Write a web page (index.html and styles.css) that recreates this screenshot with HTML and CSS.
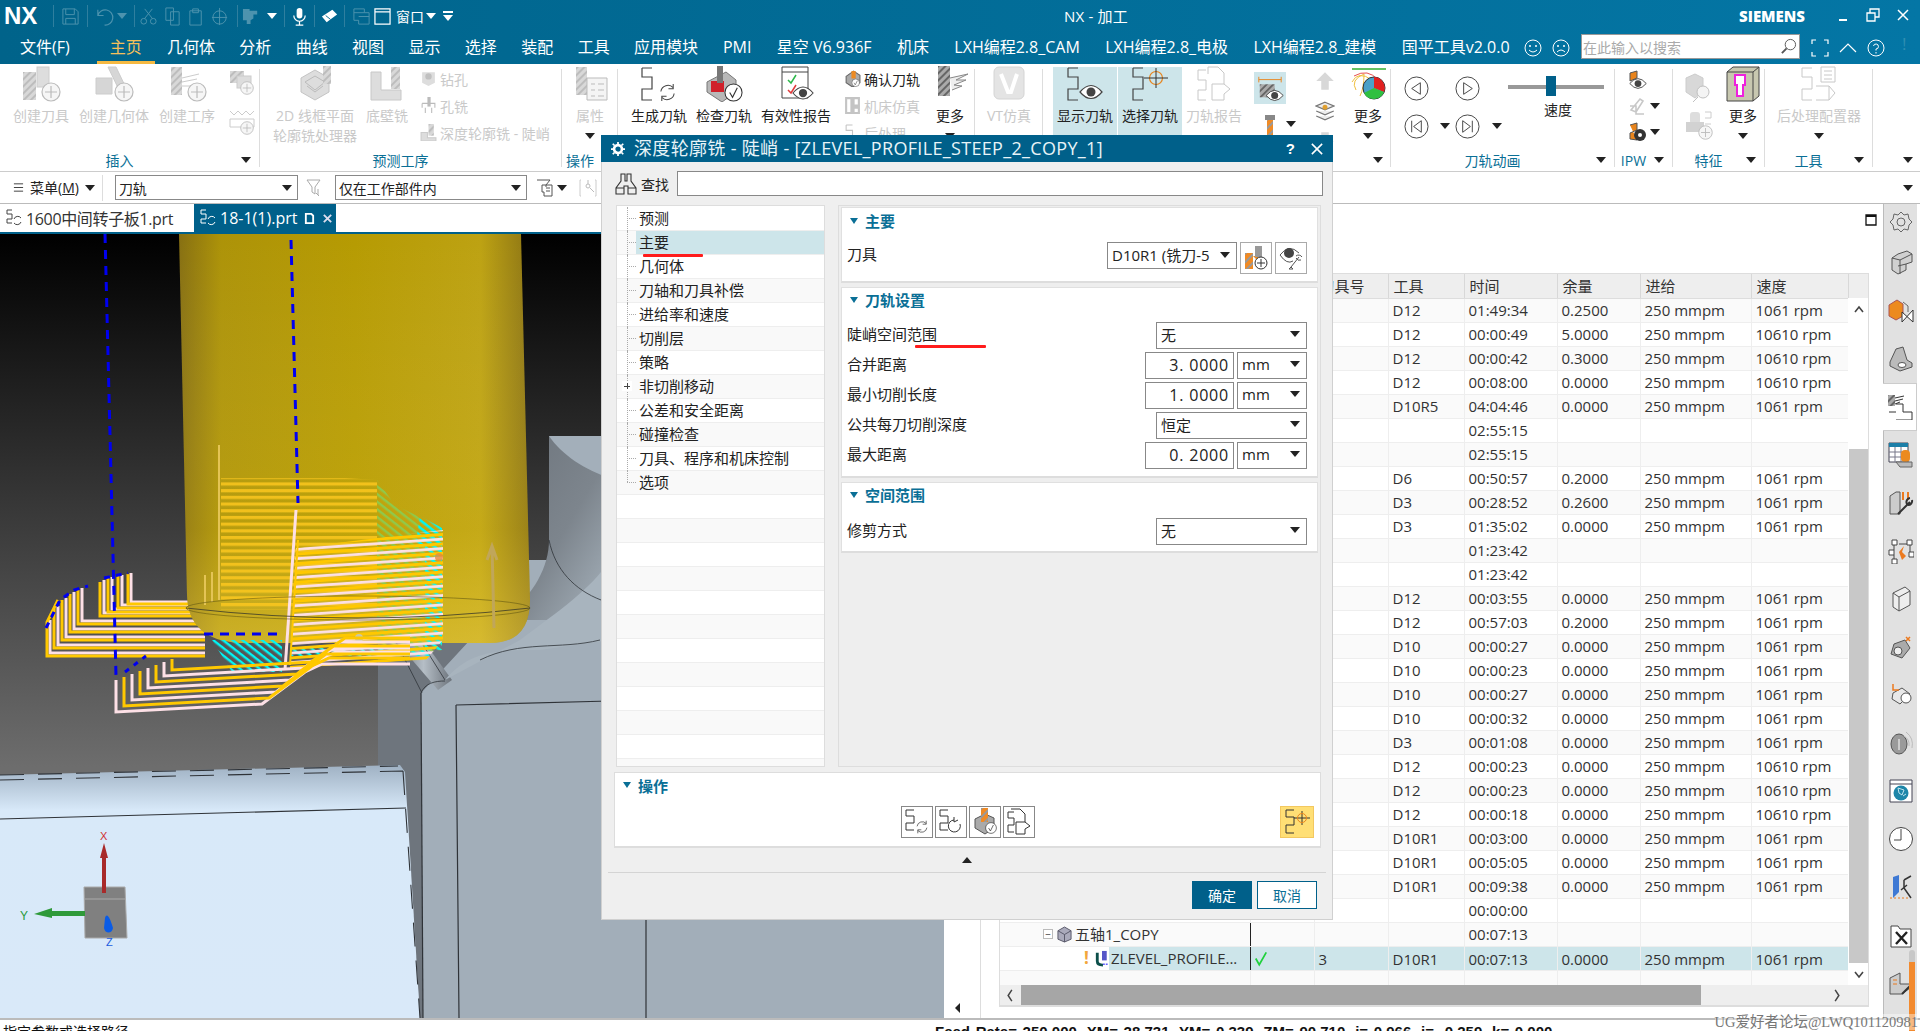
FILE: index.html
```html
<!DOCTYPE html>
<html lang="zh">
<head>
<meta charset="utf-8">
<title>NX - 加工</title>
<link rel="stylesheet" href="styles.css">
</head>
<body>
<svg class="defs" aria-hidden="true">
  <defs>
    <pattern id="hatch" width="5" height="5" patternUnits="userSpaceOnUse" patternTransform="rotate(45)"><rect width="5" height="5" fill="#d8d8d8"/><rect width="2" height="5" fill="#bdbdbd"/></pattern>
    <pattern id="hatchD" width="5" height="5" patternUnits="userSpaceOnUse" patternTransform="rotate(45)"><rect width="5" height="5" fill="#aaa"/><rect width="2" height="5" fill="#666"/></pattern>
    <pattern id="hatchO" width="6" height="6" patternUnits="userSpaceOnUse" patternTransform="rotate(45)"><rect width="6" height="6" fill="#f08a24"/><rect width="2" height="6" fill="#999"/></pattern>
    <symbol id="sp" viewBox="0 0 40 36"><path d="M3 2H13M3 2V11H13V23H3V34H13" fill="none" stroke="currentColor" stroke-width="1.2"/></symbol>
    <symbol id="plus" viewBox="0 0 20 20"><circle cx="10" cy="10" r="9" fill="#f6f6f6" stroke="#bbb" stroke-width="1.2"/><path d="M10 4V16M4 10H16" stroke="#bbb" stroke-width="1.2"/></symbol>
    <symbol id="eye" viewBox="0 0 24 16"><path d="M1 8Q12-5 23 8Q12 21 1 8Z" fill="#fff" stroke="#444" stroke-width="1.2"/><circle cx="12" cy="8" r="4.5" fill="#444"/></symbol>
    <symbol id="refresh" viewBox="0 0 20 20"><path d="M3 9A7.5 7.5 0 0 1 16 5M17 11A7.5 7.5 0 0 1 4 15M16 1V6H11M4 19V14H9" fill="none" stroke="#444" stroke-width="1.1"/></symbol>
    <symbol id="checkc" viewBox="0 0 20 20"><circle cx="10" cy="10" r="9" fill="#fff" stroke="#333" stroke-width="1.1"/><path d="M6 10L9 15L14 5" fill="none" stroke="#333" stroke-width="1.2"/></symbol>
    <symbol id="cross" viewBox="0 0 24 24"><circle cx="12" cy="12" r="6.5" fill="none" stroke="#e8841c" stroke-width="1.2"/><path d="M0 12H24M12 2V22" stroke="#333" stroke-width="1"/></symbol>
    <symbol id="circleL" viewBox="0 0 26 26"><circle cx="13" cy="13" r="12" fill="#fff" stroke="#444" stroke-width="1"/></symbol>
  </defs>
</svg>

<header class="titlebar">
  <div class="qa">
    <b class="logo">NX</b>
    <i class="qsep"></i>
    <svg class="q20" viewBox="0 0 20 20"><path d="M2 2H15L18 5V18H2ZM5 2V8H14V2M5 18V12H15V18" fill="none" stroke="#4d93ae"/></svg>
    <i class="qsep"></i>
    <svg class="q20" viewBox="0 0 20 20"><path d="M3 3V9H9M3 9A8 8 0 1 1 10 19" fill="none" stroke="#4d93ae" stroke-width="1.2"/></svg>
    <i class="tri tri-dim"></i>
    <i class="qsep"></i>
    <svg class="q20 q-tight" viewBox="0 0 20 20"><circle cx="5" cy="15" r="3" fill="none" stroke="#4d93ae"/><circle cx="15" cy="15" r="3" fill="none" stroke="#4d93ae"/><path d="M6 12L14 2M14 12L6 2" stroke="#4d93ae"/></svg>
    <svg class="q20 q-gap" viewBox="0 0 20 20"><path d="M3 1H11V14H3ZM8 5H17V19H8Z" fill="none" stroke="#4d93ae"/></svg>
    <svg class="q20 q-gap" viewBox="0 0 20 20"><path d="M3 4H15V19H3ZM6 2H12V6H6Z" fill="none" stroke="#4d93ae"/></svg>
    <svg class="q20 q-gap" viewBox="0 0 20 20"><circle cx="9" cy="11" r="7" fill="none" stroke="#4d93ae"/><path d="M9 1V19M1 11H17" stroke="#4d93ae"/></svg>
    <i class="qsep"></i>
    <svg class="q20 q-tight" viewBox="0 0 20 20"><path d="M1 2H8V4H16V8L12 8V12L9 14V18H5V14H1Z" fill="#4d93ae"/></svg>
    <i class="tri tri-w q-tri"></i>
    <i class="qsep"></i>
    <svg class="q20 q-mic" viewBox="0 0 20 20"><rect x="7" y="1" width="6" height="11" rx="3" fill="#fff"/><path d="M4 9A6 6 0 0 0 16 9M10 15V19M6 19H14" fill="none" stroke="#fff" stroke-width="1.3"/></svg>
    <i class="qsep qsep-n"></i>
    <svg class="q20 q-er" viewBox="0 0 20 20"><path d="M2 10L13 3L18 8L7 16Z" fill="#fff"/><path d="M6 9L11 13" stroke="#056890"/></svg>
    <i class="qsep qsep-n"></i>
    <svg class="q20 q-dim" viewBox="0 0 20 20"><path d="M2 2H13V6H18V18H7V14H2ZM2 6H13M7 10H18" fill="none" stroke="#4d93ae"/></svg>
    <svg class="qwin" viewBox="0 0 18 18"><path d="M1 1H17V17H1ZM1 4H17" fill="none" stroke="#fff" stroke-width="1.3"/></svg>
    <span class="qwin-t">窗口</span>
    <i class="tri tri-w"></i>
    <span class="q-more"><i class="tri tri-w"></i></span>
  </div>
  <div class="app-title">NX - 加工</div>
  <div class="brand">SIEMENS</div>
  <div class="winbtn">
    <svg class="wb" viewBox="0 0 14 14"><path d="M3 12H11" stroke="#fff" stroke-width="2"/></svg>
    <svg class="wb" viewBox="0 0 14 14"><path d="M1 5H9V13H1ZM4 5V1H13V9H9" fill="none" stroke="#fff" stroke-width="1.3"/></svg>
    <svg class="wb" viewBox="0 0 14 14"><path d="M2 2L12 12M12 2L2 12" stroke="#fff" stroke-width="1.5"/></svg>
  </div>
</header>

<nav class="menubar">
  <a class="m m-file">文件(F)</a>
  <a class="m m-act">主页</a>
  <a class="m m-c">几何体</a><a class="m m-c">分析</a><a class="m m-c">曲线</a><a class="m m-c">视图</a><a class="m m-c">显示</a><a class="m m-c">选择</a><a class="m m-c">装配</a><a class="m m-c">工具</a><a class="m m-c">应用模块</a><a class="m">PMI</a><a class="m">星空 V6.936F</a><a class="m">机床</a><a class="m">LXH编程2.8_CAM</a><a class="m">LXH编程2.8_电极</a><a class="m">LXH编程2.8_建模</a><a class="m">国平工具v2.0.0</a>
  <svg class="face face-1" viewBox="0 0 18 18"><circle cx="9" cy="9" r="8" fill="none" stroke="#fff"/><circle cx="6" cy="7" r="1" fill="#fff"/><circle cx="12" cy="7" r="1" fill="#fff"/><path d="M5 11Q9 15 13 11" fill="none" stroke="#fff"/></svg>
  <svg class="face" viewBox="0 0 18 18"><circle cx="9" cy="9" r="8" fill="none" stroke="#fff"/><circle cx="6" cy="7" r="1" fill="#fff"/><circle cx="12" cy="7" r="1" fill="#fff"/><path d="M5 13Q9 9 13 13" fill="none" stroke="#fff"/></svg>
  <div class="search"><span>在此输入以搜索</span>
    <svg class="lens" viewBox="0 0 18 18"><circle cx="11" cy="7" r="5.5" fill="none" stroke="#555"/><path d="M7 11L2 16" stroke="#555" stroke-width="2"/></svg>
  </div>
  <svg class="ctl ctl-1" viewBox="0 0 18 18"><path d="M1 5V1H5M13 1H17V5M17 13V17H13M5 17H1V13" fill="none" stroke="#fff" stroke-width="1.2"/></svg>
  <svg class="ctl ctl-2" viewBox="0 0 18 18"><path d="M1 13L9 5L17 13" fill="none" stroke="#fff" stroke-width="1.2"/></svg>
  <svg class="ctl ctl-3" viewBox="0 0 18 18"><circle cx="9" cy="9" r="8" fill="none" stroke="#fff"/><path d="M6.5 7A2.5 2.5 0 1 1 9 10V11.5M9 13V14.5" fill="none" stroke="#fff"/></svg>
  <span class="bang">!</span>
</nav>

<section class="ribbon">
  <div class="group g1">
    <div class="g-body">
      <div class="tool dis w82"><svg class="ic" viewBox="0 0 40 36"><rect x="2" y="6" width="13" height="28" fill="url(#hatch)"/><rect x="16" y="1" width="12" height="20" fill="#ddd" stroke="#ccc"/><use href="#plus" x="20" y="16" width="20" height="20"/></svg><span>创建刀具</span></div>
      <div class="tool dis w64"><svg class="ic" viewBox="0 0 40 36"><path d="M14 1H22L34 26H26ZM2 12H18V28H2Z" fill="#d6d6d6" stroke="#ccc"/><use href="#plus" x="20" y="16" width="20" height="20"/></svg><span>创建几何体</span></div>
      <div class="tool dis w82"><svg class="ic" viewBox="0 0 40 36"><rect x="4" y="1" width="11" height="28" fill="url(#hatch)"/><path d="M15 12L32 8M15 16L30 13M15 20H28" stroke="#ccc" fill="none"/><use href="#plus" x="20" y="16" width="20" height="20"/></svg><span>创建工序</span></div>
      <div class="col-small w28">
        <svg class="ic26" viewBox="0 0 26 26"><rect x="1" y="2" width="14" height="12" fill="url(#hatch)"/><rect x="8" y="7" width="14" height="12" fill="#ddd" stroke="#ccc"/><use href="#plus" x="11" y="12" width="14" height="14"/></svg>
        <svg class="ic26" viewBox="0 0 26 26"><path d="M1 2L5 6L9 2L13 6L17 2L21 6L25 2M1 10H25V18H1Z" fill="none" stroke="#ccc"/><use href="#plus" x="11" y="12" width="14" height="14"/></svg>
      </div>
    </div>
    <div class="g-label">插入<i class="tri g-tri"></i></div>
  </div>

  <div class="group g2">
    <div class="g-body">
      <div class="tool dis w110"><svg class="ic" viewBox="0 0 40 36"><path d="M20 4L34 12V26L20 34L6 26V12Z" fill="#ddd" stroke="#c4c4c4"/><path d="M10 16L20 10L30 16L20 24ZM12 20L20 26L28 20" fill="none" stroke="#bbb"/><rect x="28" y="0" width="8" height="18" fill="url(#hatch)"/></svg><span class="two">2D 线框平面<br>轮廓铣处理器</span></div>
      <div class="tool dis w34"><svg class="ic" viewBox="0 0 40 36"><path d="M4 6H14V24H34V34H4Z" fill="#ddd" stroke="#c8c8c8"/><rect x="24" y="1" width="9" height="22" fill="url(#hatch)"/></svg><span>底壁铣</span></div>
      <ul class="mini w142">
        <li class="dis"><svg class="ic16" viewBox="0 0 16 16"><path d="M2 2H14V12L8 15L2 12Z" fill="#ddd"/><circle cx="8" cy="6" r="3" fill="#c0c0c0"/></svg>钻孔</li>
        <li class="dis"><svg class="ic16" viewBox="0 0 16 16"><rect x="7" y="0" width="3" height="9" fill="#bbb"/><path d="M2 6H14V10M2 6V10M5 10V15M11 10V15" fill="none" stroke="#bbb"/></svg>孔铣</li>
        <li class="dis"><svg class="ic16" viewBox="0 0 16 16"><path d="M1 8H7V13H15V16H1Z" fill="#ddd" stroke="#ccc"/><rect x="8" y="0" width="5" height="11" fill="url(#hatch)"/></svg>深度轮廓铣 - 陡峭</li>
      </ul>
    </div>
    <div class="g-label">预测工序</div>
  </div>

  <div class="group g3">
    <div class="g-body">
      <div class="tool dis w56"><svg class="ic" viewBox="0 0 40 36"><rect x="6" y="1" width="11" height="28" fill="url(#hatch)"/><path d="M17 12H37V34H17ZM21 18H25M21 24H25M21 30H25M28 18H34M28 24H34M28 30H34" fill="#f4f4f4" stroke="#bbb"/></svg><span>属性</span><i class="tri tool-tri"></i></div>
    </div>
    <div class="g-label g-left">操作</div>
  </div>

  <div class="group g4">
    <div class="g-body">
      <div class="tool w82"><svg class="ic dark" viewBox="0 0 40 36"><use href="#sp" width="40" height="36"/><use href="#refresh" x="19" y="17" width="19" height="19"/></svg><span>生成刀轨</span></div>
      <div class="tool w48"><svg class="ic" viewBox="0 0 40 36"><path d="M3 16L22 6L32 14V26L18 36L3 26Z" fill="#b8b8b8" stroke="#777"/><path d="M7 15H20V26H7Z" fill="#d0202a"/><rect x="13" y="0" width="6" height="17" fill="#777"/><use href="#checkc" x="20" y="17" width="19" height="19"/></svg><span>检查刀轨</span></div>
      <div class="tool w96"><svg class="ic" viewBox="0 0 40 36"><path d="M6 1H32V32H6ZM6 6H32" fill="#fff" stroke="#444"/><path d="M12 14L15 17L20 9" fill="none" stroke="#2cb84a" stroke-width="1.5"/><path d="M12 24L15 27L20 19" fill="none" stroke="#e03a3a" stroke-width="1.5"/><use href="#eye" x="16" y="19" width="22" height="16"/></svg><span>有效性报告</span></div>
      <ul class="mini w81 mini-t">
        <li><svg class="ic16" viewBox="0 0 16 16"><path d="M2 6L9 1L15 5V12L8 16L2 12Z" fill="#aaa" stroke="#666"/><path d="M7 1H11V8H7Z" fill="#ec8a22"/><use href="#checkc" x="7" y="8" width="8" height="8"/></svg>确认刀轨</li>
        <li class="dis"><svg class="ic16" viewBox="0 0 16 16"><path d="M2 1H7V15H2ZM9 1H14V8H9ZM9 10H14V15H9Z" fill="none" stroke="#c4c4c4" stroke-width="2"/></svg>机床仿真</li>
        <li class="dis"><svg class="ic16" viewBox="0 0 16 16"><path d="M2 1H8M2 1V6H8V11H2V15" fill="none" stroke="#c4c4c4"/></svg>后处理</li>
      </ul>
      <div class="tool w50"><svg class="ic" viewBox="0 0 40 36"><rect x="8" y="0" width="12" height="30" fill="url(#hatchD)"/><path d="M20 12L38 8L26 14L36 14L24 19L32 20L22 24" fill="#eee" stroke="#888"/></svg><span>更多</span><i class="tri tool-tri"></i></div>
    </div>
    <div class="g-label"></div>
  </div>

  <div class="group g5">
    <div class="g-body">
      <div class="tool dis w68"><svg class="ic" viewBox="0 0 40 36"><rect x="5" y="1" width="30" height="32" rx="5" fill="#e4e4e4" stroke="#d4d4d4"/><path d="M12 8L19 26H22L28 8" fill="none" stroke="#fff" stroke-width="4"/></svg><span>VT仿真</span></div>
    </div>
    <div class="g-label"></div>
  </div>

  <div class="group g6">
    <div class="g-body g6-body">
      <div class="tool hi w64"><svg class="ic dark" viewBox="0 0 40 36"><use href="#sp" width="40" height="36"/><use href="#eye" x="14" y="18" width="24" height="16"/></svg><span>显示刀轨</span></div>
      <div class="tool hi w64 hi2"><svg class="ic dark" viewBox="0 0 40 36"><use href="#sp" width="40" height="36"/><use href="#cross" x="14" y="0" width="24" height="24"/></svg><span>选择刀轨</span></div>
      <div class="tool dis w64"><svg class="ic" viewBox="0 0 40 36"><path d="M14 1H24L30 7V18M14 1V8M30 18H18V34H30V28L36 23L30 18M4 4H12M4 4V14H12V24H4V34H12" fill="none" stroke="#c8c8c8"/></svg><span>刀轨报告</span></div>
      <div class="stack w42">
        <div class="hibox"><svg class="ic26b" viewBox="0 0 30 30"><path d="M3 6H27M3 3V9M27 3V9" stroke="#e8841c" fill="none"/><rect x="4" y="11" width="16" height="14" fill="url(#hatchD)"/><use href="#eye" x="10" y="16" width="20" height="14"/></svg></div>
        <svg class="drill" viewBox="0 0 16 24"><rect x="3" y="0" width="10" height="5" fill="#888"/><rect x="5" y="5" width="6" height="19" fill="url(#hatchO)"/></svg>
      </div>
      <i class="tri drill-tri"></i>
      <div class="stack w40 arrows">
        <svg class="ic16b" viewBox="0 0 16 16"><path d="M8 1L15 8H11V15H5V8H1Z" fill="#d8d8d8"/></svg>
        <svg class="ic16b" viewBox="0 0 16 16"><path d="M8 1L15 4L8 7L1 4ZM1 8L8 11L15 8M1 12L8 15L15 12" fill="#eee" stroke="#777"/><circle cx="8" cy="5" r="2" fill="#e0a030"/></svg>
        <svg class="ic16b" viewBox="0 0 16 16"><path d="M8 15L15 8H11V1H5V8H1Z" fill="#d8d8d8"/></svg>
      </div>
      <div class="tool w46"><svg class="ic" viewBox="0 0 40 36"><path d="M4 3H38" stroke="#2fae2f" stroke-width="1.5"/><path d="M4 16Q10 4 24 14M8 24Q2 14 16 8Q16 22 12 30" fill="none" stroke="#f0c040"/><path d="M6 10Q20 2 30 14" fill="none" stroke="#e85050"/><circle cx="26" cy="22" r="11" fill="#4aa0c8" stroke="#333"/><path d="M26 22V11A11 11 0 0 1 36 26Z" fill="#e02020"/><path d="M26 22L36 26A11 11 0 0 1 16 27Z" fill="#30c040"/></svg><span>更多</span><i class="tri tool-tri"></i></div>
    </div>
    <div class="g-label g-end"><i class="tri"></i></div>
  </div>

  <div class="group g7">
    <div class="g-body anim">
      <svg class="play" viewBox="0 0 26 26"><use href="#circleL" width="26" height="26"/><path d="M17 7L8 13L17 19Z" fill="none" stroke="#444"/></svg>
      <svg class="play" viewBox="0 0 26 26"><use href="#circleL" width="26" height="26"/><path d="M9 7L18 13L9 19Z" fill="none" stroke="#444"/></svg>
      <div class="speed">
        <div class="slider"><i class="thumb"></i></div>
        <span>速度</span>
      </div>
      <div class="playt"><svg class="play" viewBox="0 0 26 26"><use href="#circleL" width="26" height="26"/><path d="M18 7L10 13L18 19ZM8 7V19" fill="none" stroke="#444"/></svg><i class="tri play-tri"></i></div>
      <div class="playt"><svg class="play" viewBox="0 0 26 26"><use href="#circleL" width="26" height="26"/><path d="M8 7L16 13L8 19ZM18 7V19" fill="none" stroke="#444"/></svg><i class="tri play-tri"></i></div>
    </div>
    <div class="g-label">刀轨动画<i class="tri g-tri"></i></div>
  </div>

  <div class="group g8">
    <div class="g-body ipw">
      <div class="ipw-r"><svg class="ic20" viewBox="0 0 20 20"><path d="M3 3L10 1V8L3 11Z" fill="#e8841c" stroke="#555"/><use href="#eye" x="2" y="7" width="18" height="13"/></svg></div>
      <div class="ipw-r"><svg class="ic20" viewBox="0 0 20 20"><path d="M4 14L13 3L16 5L9 16ZM3 10H9V18H17" fill="none" stroke="#c8c8c8" stroke-width="1.6"/></svg><i class="tri ipw-tri"></i></div>
      <div class="ipw-r"><svg class="ic20" viewBox="0 0 20 20"><path d="M3 3L10 1V8L3 11V17L10 18" fill="#e8841c" stroke="#555"/><circle cx="13" cy="13" r="6" fill="#333"/><circle cx="13" cy="13" r="2" fill="#fff"/></svg><i class="tri ipw-tri"></i></div>
    </div>
    <div class="g-label">IPW<i class="tri g-tri"></i></div>
  </div>

  <div class="group g9">
    <div class="g-body">
      <div class="stack w50 feat">
        <svg class="ic30" viewBox="0 0 30 30"><path d="M3 6L12 2L20 6V20L12 26L3 20Z" fill="#d8d8d8" stroke="#ccc"/><circle cx="20" cy="20" r="6" fill="#f4f4f4" stroke="#c0c0c0"/><path d="M15 25L10 30" stroke="#c0c0c0"/></svg>
        <svg class="ic30" viewBox="0 0 30 30"><rect x="7" y="2" width="10" height="12" rx="3" fill="#ddd"/><rect x="3" y="12" width="18" height="10" fill="#d2d2d2"/><path d="M22 2H28V8H22M22 14H28" fill="none" stroke="#ccc"/><use href="#plus" x="15" y="15" width="15" height="15"/></svg>
      </div>
      <div class="tool w40"><svg class="ic" viewBox="0 0 40 36"><path d="M4 6L10 1H36V30L30 35H4Z" fill="#c8c8b0" stroke="#444"/><path d="M4 6H30V35M30 6L36 1" fill="none" stroke="#444"/><path d="M12 9H22V19H20V30H14V19H12Z" fill="#fff" stroke="#ee22dd" stroke-width="2"/></svg><span>更多</span><i class="tri tool-tri"></i></div>
    </div>
    <div class="g-label">特征<i class="tri g-tri"></i></div>
  </div>

  <div class="group g10">
    <div class="g-body">
      <div class="tool dis w108"><svg class="ic" viewBox="0 0 40 36"><path d="M3 2H13M3 2V11H13V23H3V34H13M22 1H36V16H22ZM25 5H33M25 9H33M25 13H33M17 20H30V34H17M30 20L36 27L30 34" fill="none" stroke="#c8c8c8"/></svg><span>后处理配置器</span><i class="tri tool-tri"></i></div>
    </div>
    <div class="g-label">工具<i class="tri g-tri"></i></div>
  </div>

  <div class="group g11">
    <div class="g-body"></div>
    <div class="g-label g-end"><i class="tri"></i></div>
  </div>
</section>

<section class="toolbar">
  <svg class="burger" viewBox="0 0 12 12"><path d="M1 2H11M1 6H11M1 10H11" stroke="#333"/></svg>
  <span class="tb-menu">菜单(<u>M</u>)</span>
  <i class="tri"></i>
  <i class="tb-sep"></i>
  <div class="sel sel-a"><span>刀轨</span><i class="tri"></i></div>
  <svg class="tb-ic" viewBox="0 0 18 18"><path d="M1 1H14L9 8V15L6 13V8Z" fill="none" stroke="#aaa"/><path d="M12 10V16M10 14L13 17" stroke="#aaa" fill="none"/></svg>
  <div class="sel sel-b"><span>仅在工作部件内</span><i class="tri"></i></div>
  <svg class="tb-ic tb-ic-2" viewBox="0 0 18 18"><path d="M1 1H14L10 6V8" fill="none" stroke="#555"/><path d="M6 6H16V17H8V13H6Z" fill="none" stroke="#555"/><path d="M10 9H14M10 12H14" stroke="#555"/></svg>
  <i class="tri"></i>
  <svg class="tb-ic tb-ic-3" viewBox="0 0 18 18"><path d="M2 1H1V17H2M16 1H17V17H16" fill="none" stroke="#ccc"/><circle cx="9" cy="7" r="2" fill="none" stroke="#bbb"/><path d="M9 1V5M11 9L15 13" stroke="#bbb"/></svg>
  <span class="tb-spring"></span>
  <i class="tri tb-last"></i>
</section>

<main class="work">
  <div class="graphics">
    <div class="tabs">
      <div class="tab"><svg class="tab-ic" viewBox="0 0 18 18"><path d="M2 1H7M2 1V5H7V10H2V14H7" fill="none" stroke="#444"/><path d="M9 10A4 4 0 0 1 16 9M16 13A4 4 0 0 1 9 14" fill="none" stroke="#444"/></svg>1600中间转子板1.prt</div>
      <div class="tab tab-on"><svg class="tab-ic" viewBox="0 0 18 18"><path d="M2 1H7M2 1V5H7V10H2V14H7" fill="none" stroke="#fff"/><path d="M9 10A4 4 0 0 1 16 9M16 13A4 4 0 0 1 9 14" fill="none" stroke="#fff"/></svg>18-1(1).prt<svg class="tab-sm" viewBox="0 0 12 12"><path d="M2 1H8L10 3V11H2Z" fill="none" stroke="#fff" stroke-width="2"/></svg><svg class="tab-sm" viewBox="0 0 12 12"><path d="M2 2L10 10M10 2L2 10" stroke="#dde" stroke-width="2"/></svg></div>
    </div>
    <svg class="scene" viewBox="0 234 944 784" preserveAspectRatio="none">
      <defs>
        <linearGradient id="bg" x1="0" y1="0" x2="0" y2="1"><stop offset="0" stop-color="#000"/><stop offset=".68" stop-color="#6d6d6d"/><stop offset="1" stop-color="#6d6d6d"/></linearGradient>
        <linearGradient id="plate" x1="0" y1="0" x2="0" y2="1"><stop offset="0" stop-color="#9fb1c3"/><stop offset=".18" stop-color="#d8e9f9"/><stop offset="1" stop-color="#d9e9f9"/></linearGradient>
        <linearGradient id="toolg" x1="0" y1="0" x2="1" y2="0"><stop offset="0" stop-color="#877012"/><stop offset=".12" stop-color="#ad9308"/><stop offset=".5" stop-color="#b69b02"/><stop offset=".86" stop-color="#bda212"/><stop offset="1" stop-color="#8d7514"/></linearGradient>
        <linearGradient id="toolv" x1="0" y1="0" x2="0" y2="1"><stop offset="0" stop-color="#fff" stop-opacity="0"/><stop offset=".72" stop-color="#ffe040" stop-opacity=".12"/><stop offset="1" stop-color="#ffe060" stop-opacity=".38"/></linearGradient>
        <linearGradient id="metal" x1="0" y1="0" x2="1" y2="1"><stop offset="0" stop-color="#6c737b"/><stop offset=".55" stop-color="#7d858d"/><stop offset="1" stop-color="#a9b5bf"/></linearGradient>
        <linearGradient id="ridge" x1="0" y1="0" x2="1" y2="0"><stop offset="0" stop-color="#6c737b"/><stop offset=".5" stop-color="#b5bec6"/><stop offset="1" stop-color="#6c737b"/></linearGradient>
        <pattern id="stA" width="12" height="6.7" patternUnits="userSpaceOnUse"><rect width="12" height="3.2" fill="#ffc91f"/></pattern>
        <pattern id="stB" width="12" height="9.4" patternUnits="userSpaceOnUse" patternTransform="skewY(-4)"><rect width="12" height="3" fill="#ffc800"/><rect y="4.6" width="12" height="2.8" fill="#fde0e6"/></pattern>
        <pattern id="stC" width="8" height="6" patternUnits="userSpaceOnUse" patternTransform="rotate(38)"><rect width="8" height="2.4" fill="#00f5f5"/></pattern>
        <pattern id="stG" width="8" height="6" patternUnits="userSpaceOnUse" patternTransform="rotate(38)"><rect width="8" height="2.4" fill="#8fc94a"/></pattern>
      </defs>
      <rect x="0" y="234" width="944" height="784" fill="url(#bg)"/>
      <rect x="378" y="560" width="566" height="458" fill="#a2aeb9"/>
      <path d="M549 436H610V620H500C530 600 549 570 549 540Z" fill="url(#metal)"/>
      <path d="M549 436H610V478C585 470 562 455 549 436Z" fill="#a3afba"/>
      <path d="M378 640H470L421 693L423 1018H420L403 770L378 766Z" fill="#6e757d"/>
      <path d="M395 640L438 690L452 680L420 636Z" fill="url(#ridge)"/>
      <path d="M445 680C470 650 500 650 540 650L610 640V560C590 590 560 610 520 640Z" fill="#a8b4be"/>
      <path d="M421 693C425 683 435 681 445 681M549 540C555 570 575 590 601 600M480 660C520 640 560 650 600 640M395 640L422 693M420 640L445 680" fill="none" stroke="#2f3338" stroke-width=".8"/>
      <path d="M456 705L610 701M456 705L459 1018M646 918V1018" fill="none" stroke="#2f3338" stroke-width="1.2"/>
      <path d="M421 693L423 1018" fill="none" stroke="#2f3338" stroke-width="1.2"/>
      <path d="M0 775L400 765L405 772L420 1018H0Z" fill="url(#plate)"/>
      <path d="M0 775L398 766M0 780L403 771M403 771L420 1018" fill="none" stroke="#2f3338" stroke-width="1.1" stroke-dasharray="24 14"/>
      <path d="M0 819L406 808" stroke="#2f3338" stroke-width="1.1" fill="none"/>

      <path class="path-p" fill="none" d="M205 653H50V620M205 645H58V606M205 637H66V598M205 629H74V592M205 621H82V588M205 613H104V580M205 609H112V577M205 605H122V575M205 602H131V573"/>
      <path class="path-y" fill="none" d="M205 656H47V622L58 600M205 648H54V608M205 640H62V600M205 632H70V594M205 624H78V590M205 616H100V582M205 612H108V578M205 608H118V576M205 604H128V574"/>
      <path d="M46 628L60 600L74 590L88 586M104 578L128 573" fill="none" stroke="#0000f0" stroke-width="3" stroke-dasharray="6 6"/>

      <path d="M179 234H521L530 600Q530 643 490 643H240Q188 640 187 595Z" fill="url(#toolg)"/>
      <path d="M179 234H521L530 600Q530 643 490 643H240Q188 640 187 595Z" fill="url(#toolv)"/>
      <path d="M221 478H345L377 480V610H221Z" fill="url(#stA)" opacity=".8"/>
      <path d="M219 445V600M205 575V605M212 572V602" stroke="#e4c455" stroke-width="2" fill="none"/>
      <path d="M377 480L395 505L442 528V590L377 600Z" fill="url(#stG)"/>
      <path d="M420 516L442 528V545L415 548Z" fill="url(#stC)"/>
      <path d="M377 545H442V650L377 660Z" fill="url(#stG)"/>
      <path d="M425 530H442V650L425 650Z" fill="url(#stC)"/>
      <path d="M212 640H282V672H232Z" fill="url(#stC)"/>
      <path d="M290 648H430V656H290Z" fill="url(#stC)"/>
      <path d="M296 548L443 530V640L426 660L290 668Z" fill="url(#stB)"/>
      <path d="M296 510L285 670" stroke="#fde0e6" stroke-width="3" fill="none"/>
      <path d="M298 540L290 665" stroke="#ffc800" stroke-width="2" fill="none"/>
      <ellipse cx="358" cy="608" rx="172" ry="12" fill="none" stroke="#5c5210" stroke-width=".8" opacity=".7"/>
      <path d="M186 608Q358 628 530 608" fill="none" stroke="#3a3a2a" stroke-width=".8"/>
      <path d="M492 546L494 628M487 560L492 546L497 560" fill="none" stroke="#c0a65a" stroke-width="3"/>
      <circle cx="439" cy="557" r="4" fill="#e98a3a" opacity=".8"/>
      <circle cx="359" cy="638" r="4" fill="#c8c8a8"/>

      <path class="path-p" fill="none" d="M116 680V712L262 704L305 672L322 664H410M132 674V700L276 692L319 660L336 652H410M148 668V688L290 680L333 648H410M164 662V676L304 668L340 642H410"/>
      <path class="path-y" fill="none" d="M124 677V706L269 698L312 666L329 658H410M140 671V694L283 686L326 654H410M156 665V682L297 674L333 646H410M172 659V670L311 662L345 638H410"/>

      <path d="M105 234L116 676M291 240L298 503M204 634H282" fill="none" stroke="#0000f0" stroke-width="3" stroke-dasharray="9 7"/>
      <path d="M125 672L146 656" fill="none" stroke="#0000f0" stroke-width="3" stroke-dasharray="5 6"/>

      <path d="M84 887H125L127 938H85Z" fill="#808080" stroke="#aaa"/>
      <path d="M85 899H126" stroke="#aaa" fill="none"/>
      <path d="M102 893V858H100L104 843L108 858H106V893Z" fill="#a82a2a"/>
      <path d="M85 911H52V908L34 914L52 918V916H85Z" fill="#2f9a3a"/>
      <path d="M105 918C107 912 110 918 113 928C112 934 105 934 104 928Z" fill="#0a5ce6"/>
      <text x="100" y="840" class="ax ax-x">X</text>
      <text x="20" y="920" class="ax ax-y">Y</text>
      <text x="106" y="946" class="ax ax-z">Z</text>
    </svg>
  </div>
  <div class="strip"><i class="tri tri-left"></i></div>
  <div class="nav">
    <div class="nav-top"><svg class="nav-win" viewBox="0 0 12 12"><path d="M1 1H11V11H1Z" fill="none" stroke="#111" stroke-width="1.3"/><path d="M1 2H11" stroke="#111" stroke-width="2"/></svg></div>
    <div class="grid">
      <table>
        <colgroup><col class="c-name"><col class="c-chk"><col class="c-no"><col class="c-tool"><col class="c-time"><col class="c-all"><col class="c-feed"><col class="c-spd"><col class="c-sb"></colgroup>
        <thead><tr><th></th><th></th><th>刀具号</th><th>工具</th><th>时间</th><th>余量</th><th>进给</th><th>速度</th><th></th></tr></thead>
        <tbody>
          <tr><td></td><td></td><td></td><td>D12</td><td>01:49:34</td><td>0.2500</td><td>250 mmpm</td><td>1061 rpm</td></tr>
          <tr><td></td><td></td><td></td><td>D12</td><td>00:00:49</td><td>5.0000</td><td>250 mmpm</td><td>10610 rpm</td></tr>
          <tr><td></td><td></td><td></td><td>D12</td><td>00:00:42</td><td>0.3000</td><td>250 mmpm</td><td>10610 rpm</td></tr>
          <tr><td></td><td></td><td></td><td>D12</td><td>00:08:00</td><td>0.0000</td><td>250 mmpm</td><td>10610 rpm</td></tr>
          <tr><td></td><td></td><td></td><td>D10R5</td><td>04:04:46</td><td>0.0000</td><td>250 mmpm</td><td>1061 rpm</td></tr>
          <tr><td></td><td></td><td></td><td></td><td>02:55:15</td><td></td><td></td><td></td></tr>
          <tr><td></td><td></td><td></td><td></td><td>02:55:15</td><td></td><td></td><td></td></tr>
          <tr><td></td><td></td><td></td><td>D6</td><td>00:50:57</td><td>0.2000</td><td>250 mmpm</td><td>1061 rpm</td></tr>
          <tr><td></td><td></td><td></td><td>D3</td><td>00:28:52</td><td>0.2600</td><td>250 mmpm</td><td>1061 rpm</td></tr>
          <tr><td></td><td></td><td></td><td>D3</td><td>01:35:02</td><td>0.0000</td><td>250 mmpm</td><td>1061 rpm</td></tr>
          <tr><td></td><td></td><td></td><td></td><td>01:23:42</td><td></td><td></td><td></td></tr>
          <tr><td></td><td></td><td></td><td></td><td>01:23:42</td><td></td><td></td><td></td></tr>
          <tr><td></td><td></td><td></td><td>D12</td><td>00:03:55</td><td>0.0000</td><td>250 mmpm</td><td>1061 rpm</td></tr>
          <tr><td></td><td></td><td></td><td>D12</td><td>00:57:03</td><td>0.2000</td><td>250 mmpm</td><td>1061 rpm</td></tr>
          <tr><td></td><td></td><td></td><td>D10</td><td>00:00:27</td><td>0.0000</td><td>250 mmpm</td><td>1061 rpm</td></tr>
          <tr><td></td><td></td><td></td><td>D10</td><td>00:00:23</td><td>0.0000</td><td>250 mmpm</td><td>1061 rpm</td></tr>
          <tr><td></td><td></td><td></td><td>D10</td><td>00:00:27</td><td>0.0000</td><td>250 mmpm</td><td>1061 rpm</td></tr>
          <tr><td></td><td></td><td></td><td>D10</td><td>00:00:32</td><td>0.0000</td><td>250 mmpm</td><td>1061 rpm</td></tr>
          <tr><td></td><td></td><td></td><td>D3</td><td>00:01:08</td><td>0.0000</td><td>250 mmpm</td><td>1061 rpm</td></tr>
          <tr><td></td><td></td><td></td><td>D12</td><td>00:00:23</td><td>0.0000</td><td>250 mmpm</td><td>10610 rpm</td></tr>
          <tr><td></td><td></td><td></td><td>D12</td><td>00:00:23</td><td>0.0000</td><td>250 mmpm</td><td>10610 rpm</td></tr>
          <tr><td></td><td></td><td></td><td>D12</td><td>00:00:18</td><td>0.0000</td><td>250 mmpm</td><td>10610 rpm</td></tr>
          <tr><td></td><td></td><td></td><td>D10R1</td><td>00:03:00</td><td>0.0000</td><td>250 mmpm</td><td>1061 rpm</td></tr>
          <tr><td></td><td></td><td></td><td>D10R1</td><td>00:05:05</td><td>0.0000</td><td>250 mmpm</td><td>1061 rpm</td></tr>
          <tr><td></td><td></td><td></td><td>D10R1</td><td>00:09:38</td><td>0.0000</td><td>250 mmpm</td><td>1061 rpm</td></tr>
          <tr><td></td><td></td><td></td><td></td><td>00:00:00</td><td></td><td></td><td></td></tr>
          <tr><td class="tree tree-1"><i class="box">−</i><svg class="ti" viewBox="0 0 16 18"><path d="M8 1L15 5V14L8 17L1 14V5Z" fill="#aab" stroke="#556"/><path d="M1 5L8 9L15 5M8 9V17" stroke="#556" fill="none"/></svg>五轴1_COPY</td><td></td><td></td><td></td><td>00:07:13</td><td></td><td></td><td></td></tr>
          <tr class="row-sel"><td class="tree tree-2"><i class="warn">!</i><svg class="ti ti2" viewBox="0 0 14 18"><path d="M2 3V12Q2 16 8 16" fill="none" stroke="#0c4f4a" stroke-width="3"/><rect x="7" y="1" width="5" height="10" fill="#5656c8"/><path d="M8 15H13" stroke="#00f" stroke-dasharray="2 1"/></svg>ZLEVEL_PROFILE...</td><td><svg class="tick" viewBox="0 0 16 18"><path d="M2 9L6 16L14 2" fill="none" stroke="#1fd13c" stroke-width="2"/></svg></td><td>3</td><td>D10R1</td><td>00:07:13</td><td>0.0000</td><td>250 mmpm</td><td>1061 rpm</td></tr>
          <tr><td></td><td></td><td></td><td></td><td></td><td></td><td></td><td></td></tr>
        </tbody>
      </table>
      <div class="vsb">
        <div class="vsb-up"><svg class="chev" viewBox="0 0 10 8"><path d="M1 7L5 2L9 7" fill="none" stroke="#444" stroke-width="1.6"/></svg></div>
        <div class="vsb-thumb"></div>
        <div class="vsb-down"><svg class="chev" viewBox="0 0 10 8"><path d="M1 1L5 6L9 1" fill="none" stroke="#444" stroke-width="1.6"/></svg></div>
      </div>
      <div class="hsb">
        <svg class="chevh" viewBox="0 0 8 14"><path d="M6 1L2 7L6 13" fill="none" stroke="#444" stroke-width="1.6"/></svg>
        <div class="hsb-thumb"></div>
        <svg class="chevh chevh-r" viewBox="0 0 8 14"><path d="M2 1L6 7L2 13" fill="none" stroke="#444" stroke-width="1.6"/></svg>
      </div>
    </div>
  </div>
  <aside class="rail">
    <div class="r r-first"><svg class="ri" viewBox="0 0 26 26"><circle cx="13" cy="13" r="4" fill="none" stroke="#666"/><path d="M13 3L16 6L20 5L21 10L24 13L21 16L20 21L16 20L13 23L10 20L6 21L5 16L2 13L5 10L6 5L10 6Z" fill="none" stroke="#666"/></svg></div>
    <div class="r"><svg class="ri" viewBox="0 0 26 26"><path d="M10 4L19 1L24 4V12L18 14V20L10 24L4 20V8Z" fill="#d0d0d0" stroke="#555"/><path d="M4 8L12 10L24 4M12 10V24M10 16L18 14" fill="none" stroke="#555"/></svg></div>
    <div class="r"><svg class="ri" viewBox="0 0 26 26"><path d="M1 7L9 2L15 6V18L8 22L1 18Z" fill="#ec8a1f" stroke="#a55"/><path d="M15 4L20 8V14" fill="none" stroke="#666"/><path d="M14 14L25 24V12L14 24Z" fill="#fff" stroke="#333"/></svg></div>
    <div class="r"><svg class="ri" viewBox="0 0 26 26"><path d="M8 3L15 1L19 14L24 17V21L12 25L2 20V16Z" fill="#bbb" stroke="#555"/><ellipse cx="14" cy="19" rx="4" ry="2.5" fill="#fff" stroke="#555"/></svg></div>
    <div class="r r-on"><svg class="ri" viewBox="0 0 26 26"><rect x="1" y="1" width="7" height="11" fill="url(#hatchD)"/><path d="M8 4L17 2M8 7L16 5M8 10L13 8M9 10H16V18H25V26H9M9 18H2" fill="none" stroke="#333"/></svg></div>
    <div class="r"><svg class="ri" viewBox="0 0 26 26"><path d="M1 1H20V20H1Z" fill="#fff" stroke="#445"/><path d="M1 1H20V5H1Z" fill="#1c7fa8"/><path d="M1 10H20M1 15H20M7 5V20M13 5V20" stroke="#778"/><rect x="13" y="8" width="9" height="12" rx="4" fill="#ec8a1f"/><path d="M8 20H24V25H12Z" fill="#bbb" stroke="#666"/></svg></div>
    <div class="r"><svg class="ri" viewBox="0 0 26 26"><path d="M2 6L8 2H12V24H2Z" fill="#ccc" stroke="#555"/><path d="M15 2V10M20 2V10" stroke="#ec7a1f" stroke-width="2"/><path d="M10 24L22 12M22 8A4 4 0 0 0 19 14M24 10A4 4 0 0 1 20 15" stroke="#333" stroke-width="2" fill="none"/></svg></div>
    <div class="r"><svg class="ri" viewBox="0 0 26 26"><path d="M4 2H9V7H4ZM19 2H24V7H19ZM1 12H6V17H1ZM21 14H26V19H21ZM4 21H9V26H4Z" fill="#fff" stroke="#444"/><path d="M6 7V12M22 7V14M6 17V21M11 6H19" stroke="#444"/><path d="M11 14L16 8L14 14L18 18L14 22Z" fill="#ec7a1f"/></svg></div>
    <div class="r"><svg class="ri" viewBox="0 0 26 26"><path d="M5 7L17 1L22 5V19L11 25L5 21Z" fill="#eee" stroke="#555"/><path d="M5 7L11 11V25M11 11L22 5" fill="none" stroke="#555"/></svg></div>
    <div class="r"><svg class="ri" viewBox="0 0 26 26"><path d="M6 10L17 6L22 14L14 24L3 20Z" fill="#aaa" stroke="#555"/><circle cx="10" cy="17" r="4" fill="#eee" stroke="#555"/><path d="M18 3L22 7M22 3L18 7" stroke="#ec7a1f" stroke-width="1.5"/></svg></div>
    <div class="r"><svg class="ri" viewBox="0 0 26 26"><path d="M5 11L14 6L22 12L12 22L4 17Z" fill="#e8e8e8" stroke="#555"/><circle cx="18" cy="16" r="5" fill="#fff" stroke="#555"/><path d="M5 2V8H11" fill="none" stroke="#ec7a1f" stroke-width="1.5"/></svg></div>
    <div class="r"><svg class="ri" viewBox="0 0 26 26"><ellipse cx="11" cy="14" rx="8" ry="10" fill="#9a9a9a" stroke="#555"/><path d="M11 9V20" stroke="#fff"/><path d="M18 2A16 16 0 0 1 24 18M16 6A10 10 0 0 1 21 16" fill="none" stroke="#bbb"/></svg></div>
    <div class="r"><svg class="ri" viewBox="0 0 26 26"><path d="M2 2H24V24H2ZM2 6H24" fill="#fff" stroke="#445"/><circle cx="13" cy="15" r="7.5" fill="#1e86a9"/><path d="M10 10L16 12L14 17L11 15ZM15 18L18 16" stroke="#bfe3ee" fill="none"/></svg></div>
    <div class="r"><svg class="ri" viewBox="0 0 26 26"><circle cx="13" cy="13" r="11.5" fill="#fff" stroke="#444"/><path d="M13 3V14H6" fill="none" stroke="#444"/></svg></div>
    <div class="r"><svg class="ri" viewBox="0 0 26 26"><path d="M5 3L11 1V18L5 24Z" fill="#3f79d4"/><path d="M16 6L23 2M16 6V14L23 24M19 11L13 16" fill="none" stroke="#333" stroke-width="1.5"/><path d="M2 24H20" stroke="#ec7a1f" stroke-dasharray="2 2"/></svg></div>
    <div class="r"><svg class="ri" viewBox="0 0 26 26"><path d="M3 4H10L12 7H23V25H3Z" fill="#fff" stroke="#444"/><path d="M8 10L19 22M19 10L8 22" stroke="#222" stroke-width="2.4"/></svg></div>
    <div class="r"><svg class="ri" viewBox="0 0 26 26"><path d="M2 8L12 3V14H22V18L14 24H2Z" fill="#ccc" stroke="#555"/><path d="M5 10H9M5 14H9" stroke="#ec7a1f"/><path d="M14 24L22 16M22 10L25 13" stroke="#333" stroke-width="2"/></svg></div>
  </aside>
</main>

<footer class="status">
  <span class="st-l">指定参数或选择路径</span>
  <span class="st-r">Feed Rate= 250.000, XM= 28.731, YM= 0.339, ZM= 90.710, i= 0.966, j= -0.259, k= 0.000</span>
</footer>
<i class="orange"></i>
<div class="wm">UG爱好者论坛@LWQ101120981</div>

<section class="dlg">
  <div class="dlg-title">
    <svg class="gear" viewBox="0 0 16 16"><circle cx="8" cy="8" r="4.5" fill="none" stroke="#fff" stroke-width="3"/><path d="M8 0V3M8 13V16M0 8H3M13 8H16M2 2L4 4M12 12L14 14M14 2L12 4M4 12L2 14" stroke="#fff" stroke-width="2"/></svg>
    <span class="dlg-name">深度轮廓铣 - 陡峭 - [ZLEVEL_PROFILE_STEEP_2_COPY_1]</span>
    <b class="dlg-help">?</b>
    <svg class="dlg-x" viewBox="0 0 14 14"><path d="M1 1L13 13M13 1L1 13" stroke="#fff" stroke-width="1.8"/></svg>
  </div>
  <div class="dlg-find">
    <svg class="bino" viewBox="0 0 24 24"><path d="M7 2H11V9H13V2H17V9L22 16V22H14V14H10V22H2V16L7 9ZM2 16H10M14 16H22" fill="none" stroke="#333" stroke-width="1.1"/></svg>
    <span class="find-t">查找</span>
    <div class="find-in"></div>
  </div>
  <div class="dlg-body">
    <ul class="dtree">
      <li><span>预测</span></li>
      <li class="on"><span>主要</span></li>
      <li><span>几何体</span></li>
      <li><span>刀轴和刀具补偿</span></li>
      <li><span>进给率和速度</span></li>
      <li><span>切削层</span></li>
      <li><span>策略</span></li>
      <li class="exp"><span>非切削移动</span></li>
      <li><span>公差和安全距离</span></li>
      <li><span>碰撞检查</span></li>
      <li><span>刀具、程序和机床控制</span></li>
      <li class="last"><span>选项</span></li>
      <li class="none"></li><li class="none"></li><li class="none"></li><li class="none"></li><li class="none"></li><li class="none"></li><li class="none"></li><li class="none"></li><li class="none"></li><li class="none"></li><li class="none"></li><li class="none"></li>
    </ul>
    <div class="dpanel">
      <div class="card c-a">
        <h3><i class="tri tri-teal"></i>主要</h3>
        <div class="frow frow-tool">
          <label>刀具</label>
          <div class="dd dd-tool">D10R1 (铣刀-5<i class="tri"></i></div>
          <div class="tbtn"><svg viewBox="0 0 24 26"><rect x="1" y="8" width="8" height="16" fill="url(#hatchO)"/><path d="M9 11H14V16" fill="#ec8a1f"/><rect x="11" y="1" width="7" height="11" fill="#999"/><circle cx="17" cy="18" r="6" fill="#fff" stroke="#333"/><path d="M17 14V22M13 18H21" stroke="#333"/></svg></div>
          <div class="tbtn"><svg viewBox="0 0 24 26"><path d="M1 10Q10-2 20 8" fill="#fff" stroke="#555"/><path d="M1 10Q8 20 14 16" fill="none" stroke="#555"/><circle cx="10" cy="8" r="5" fill="#444"/><path d="M12 22L20 12M23 12A4 4 0 0 0 17 11M22 15A4 4 0 0 1 17 13M10 24L12 22L14 24Z" fill="#fff" stroke="#555"/></svg></div>
        </div>
      </div>
      <div class="card c-b">
        <h3><i class="tri tri-teal"></i>刀轨设置</h3>
        <div class="frow"><label>陡峭空间范围</label><div class="dd dd-w">无<i class="tri"></i></div></div>
        <div class="frow"><label>合并距离</label><div class="num">3. 0000</div><div class="dd dd-u">mm<i class="tri"></i></div></div>
        <div class="frow"><label>最小切削长度</label><div class="num">1. 0000</div><div class="dd dd-u">mm<i class="tri"></i></div></div>
        <div class="frow"><label>公共每刀切削深度</label><div class="dd dd-w">恒定<i class="tri"></i></div></div>
        <div class="frow"><label>最大距离</label><div class="num">0. 2000</div><div class="dd dd-u">mm<i class="tri"></i></div></div>
      </div>
      <div class="card c-c">
        <h3><i class="tri tri-teal"></i>空间范围</h3>
        <div class="frow"><label>修剪方式</label><div class="dd dd-w">无<i class="tri"></i></div></div>
      </div>
    </div>
  </div>
  <div class="dops">
    <h3><i class="tri tri-teal"></i>操作</h3>
    <div class="ops">
      <div class="obtn"><svg class="oi" viewBox="0 0 26 28"><path d="M2 2H10M2 2V8H10V15H2V22H10" fill="none" stroke="#333"/><use href="#refresh" x="11" y="12" width="14" height="14"/></svg></div>
      <div class="obtn"><svg class="oi" viewBox="0 0 26 28"><path d="M2 2H10M2 2V8H10V15H2V22H10" fill="none" stroke="#333"/><path d="M22 16A6 6 0 1 1 16 12M16 9V14L20 12" fill="none" stroke="#333"/></svg></div>
      <div class="obtn"><svg class="oi" viewBox="0 0 26 28"><path d="M3 11L13 6L22 10V20L13 26L3 20Z" fill="#aaa" stroke="#555"/><rect x="9" y="0" width="7" height="14" fill="url(#hatchO)"/><use href="#checkc" x="13" y="14" width="12" height="12"/></svg></div>
      <div class="obtn"><svg class="oi" viewBox="0 0 26 28"><path d="M5 1H14L19 6V14M19 14H10V26H19V21L24 18L19 14M2 4H8M2 4V10H8V17H2V24H8" fill="none" stroke="#333"/></svg></div>
      <div class="obtn ohi"><svg class="oi" viewBox="0 0 26 28"><path d="M2 2H10M2 2V9H10V17H2V25H10" fill="none" stroke="#333"/><path d="M10 10H26M18 3V17" stroke="#333"/><circle cx="18" cy="10" r="4.5" fill="none" stroke="#e8841c"/></svg></div>
    </div>
  </div>
  <div class="dcollapse"><i class="tri tri-up"></i></div>
  <div class="dsep"></div>
  <div class="dfoot"><button class="btn btn-ok">确定</button><button class="btn">取消</button></div>
  <i class="scrib scrib-1"></i>
  <i class="scrib scrib-2"></i>
</section>
</body>
</html>
```

FILE: styles.css
```css
*{box-sizing:border-box}
html,body{margin:0;padding:0;height:1031px;overflow:hidden}
body{width:1920px;background:#fff;font-family:"Open Sans","Noto Sans CJK SC",sans-serif;font-size:14px;color:#222;position:relative;display:flex;flex-direction:column}
.defs{width:0;height:0;position:absolute}
ul{list-style:none;margin:0;padding:0}
i{font-style:normal;display:block;flex:none}
svg{display:block;flex:none}
.tri{width:0;height:0;border-left:5px solid transparent;border-right:5px solid transparent;border-top:6px solid #222}
.tri-w{border-top-color:#fff}
.tri-dim{border-top-color:#4d93ae;margin-left:3px}

/* title */
.titlebar{height:32px;background:linear-gradient(90deg,#00638a,#0476a5);display:flex;align-items:center;color:#fff;flex:none;position:relative}
.qa{display:flex;align-items:center;width:470px;white-space:nowrap}
.logo{font:700 24px/1 "Liberation Sans",sans-serif;margin-left:4px;width:42px}
.qsep{width:1px;height:22px;background:#2f7f9f;margin:0 7px}
.qsep-n{margin:0 5px}
.q20{width:19px;height:19px}
.q-tight{margin-left:-3px}
.q-gap{margin-left:5px}
.q-tri{margin-left:6px}
.q-mic{margin-left:-2px}
.q-dim{margin-left:2px}
.q-more{margin-left:7px;padding-top:2px;border-top:2px solid #fff;height:10px}
.qwin{width:17px;height:17px;margin-left:3px}
.qwin-t{color:#fff;font-size:14px;margin:0 2px 0 5px}
.app-title{position:absolute;left:1064px;top:5px;font-size:15px;letter-spacing:.2px}
.brand{position:absolute;left:1739px;top:7px;font:800 15px/18px "Open Sans",sans-serif}
.winbtn{position:absolute;left:1836px;top:8px;display:flex;gap:16px}
.wb{width:14px;height:14px}

/* menu */
.menubar{height:32px;flex:none;background:linear-gradient(90deg,#00638a,#0476a5);display:flex;align-items:center;color:#fff;font-size:16px;position:relative}
.m{padding:0 12.7px;height:32px;line-height:30px;white-space:nowrap}
.m-c{padding:0 12.2px}
.m-file{padding:0;margin:0 27px 0 20px}
.m-act{color:#f5c05a;border-bottom:3px solid #f5b942;padding:0 13px}
.face{width:18px;height:18px;margin-left:10px}
.face-1{margin-left:2px}
.search{position:absolute;left:1581px;top:2px;width:219px;height:25px;background:#fff;border:1px solid #999;display:flex;align-items:center;justify-content:space-between;padding:0 2px 0 1px;color:#aaa;font-size:14px}
.lens{width:17px;height:17px}
.ctl{position:absolute;top:7px;width:18px;height:18px}
.ctl-1{left:1811px}
.ctl-2{left:1839px}
.ctl-3{left:1867px}
.bang{position:absolute;left:1902px;top:0;color:#2f8fb2;font-size:17px}

/* ribbon */
.ribbon{height:108px;flex:none;display:flex;background:#fff;padding-top:5px;border-bottom:1px solid #ccc;position:relative}
.group{display:flex;flex-direction:column;height:98px;border-right:1px solid #ddd;flex:none}
.g1{width:260px}.g2{width:302px}.g3{width:56px}.g4{width:357px}.g5{width:68px}.g6{width:348px}.g7{width:224px}.g8{width:58px}.g9{width:92px}.g10{width:108px}.g11{width:47px;border-right:0}
.g-body{flex:1;display:flex;min-height:0}
.g6-body{padding-left:10px}
.g-label{height:22px;flex:none;display:flex;align-items:center;justify-content:center;color:#0a6f96;font-size:14px;padding:8px 20px 0 0;position:relative;white-space:nowrap}
.g-left{justify-content:flex-start;padding-left:4px;padding-right:0}
.g-end{justify-content:flex-end;padding-right:7px}
.g-tri{position:absolute;right:8px;top:12px}
.tool{display:flex;flex-direction:column;align-items:center;flex:none;font-size:14px;line-height:20px;white-space:nowrap;position:relative;color:#222}
.tool span{margin-top:2px;line-height:20px}
.tool span.two{text-align:center;line-height:20px}
.tool-tri{margin-top:7px}
.ic{width:40px;height:36px;margin-top:-3px;margin-bottom:2px}
.dark{color:#444}
.dis{color:#c9c9c9!important}
.w28{width:28px}.w34{width:34px}.w40{width:40px}.w42{width:42px}.w46{width:46px}.w48{width:48px}.w50{width:50px}.w56{width:56px}.w64{width:64px}.w68{width:68px}.w81{width:81px}.w82{width:82px}.w96{width:96px}.w108{width:108px}.w110{width:110px}.w142{width:142px;margin-left:16px}
.col-small{display:flex;flex-direction:column;align-items:center;gap:14px;flex:none}
.ic26{width:26px;height:26px}
.mini{flex:none;margin-top:-4px;overflow:hidden}
.mini li{height:27px;display:flex;align-items:center;gap:3px;white-space:nowrap;font-size:14px}
.ic16{width:17px;height:17px}
.hi{background:#cde5ea;margin-top:-2px;padding-top:2px;height:100px}
.hi2{margin-left:1px;width:64px}
.stack{display:flex;flex-direction:column;align-items:center;flex:none}
.hibox{width:32px;height:32px;background:#cde5ea;display:flex;align-items:center;justify-content:center;margin-top:3px;margin-left:5px}
.ic26b{width:28px;height:28px}
.drill{width:16px;height:24px;margin-top:11px;margin-left:5px}
.drill-tri{margin-top:52px;margin-left:-2px;margin-right:-8px}
.arrows{margin-left:17px;gap:10px;padding-top:2px}
.ic16b{width:20px;height:20px}
.anim{display:grid;grid-template-columns:50px 52px 122px;grid-template-rows:38px 38px}
.play{width:25px;height:25px;margin:auto 0;justify-self:center;align-self:center}
.speed{grid-row:1 / 3;grid-column:3;display:flex;flex-direction:column;align-items:center;padding:13px 0 0 4px}
.speed span{margin-top:10px;color:#222;font-size:14px;margin-left:4px}
.slider{width:96px;height:4px;background:#999;position:relative;margin-top:3px}
.thumb{position:absolute;left:38px;top:-9px;width:10px;height:20px;background:#00608a}
.playt{display:flex;align-items:center;justify-content:center;position:relative}
.play-tri{position:absolute;right:-9px;top:16px}
.ipw{display:flex;flex-direction:column;padding:0 0 0 12px;margin-top:-2px}
.ipw-r{height:27px;display:flex;align-items:center;gap:3px}
.ic20{width:20px;height:20px}
.feat{gap:8px;padding-top:3px}
.ic30{width:30px;height:30px}

/* toolbar */
.toolbar{height:32px;flex:none;border-bottom:1px solid #bbb;display:flex;align-items:center;background:#fff}
.burger{width:11px;height:11px;margin-left:13px}
.tb-menu{margin:0 6px;font-size:14px;line-height:18px}
.tb-sep{width:1px;height:26px;background:#ddd;margin:0 12px 0 7px}
.sel{height:25px;border:1px solid #888;display:flex;align-items:center;justify-content:space-between;padding:0 5px 0 3px;font-size:14px;background:#fff}
.sel-a{width:183px}
.sel-b{width:192px}
.tb-ic{width:18px;height:18px;margin:0 11px 0 8px}
.tb-ic-2{margin:0 3px 0 9px}
.tb-ic-3{margin-left:12px}
.tb-spring{flex:1}
.tb-last{margin-right:7px}

/* work */
.work{flex:1;min-height:0;display:flex;overflow:hidden}
.graphics{width:944px;flex:none;display:flex;flex-direction:column}
.tabs{height:30px;flex:none;display:flex;border-bottom:2px solid #00608a;background:#fff;font-size:16px}
.tab{height:28px;display:flex;align-items:center;padding:0 0 0 5px;width:194px;white-space:nowrap;color:#333;letter-spacing:-.35px}
.tab-on{background:#00608a;color:#fff;width:142px;letter-spacing:0}
.tab-ic{width:18px;height:18px;margin-right:3px}
.tab-sm{width:11px;height:11px;margin-left:7px}
.scene{width:944px;height:784px;flex:none}
.path-y{stroke:#ffc800;stroke-width:3}
.path-p{stroke:#fde0e6;stroke-width:3}
.ax{font:11px "Liberation Sans",sans-serif}
.ax-x{fill:#d03030}.ax-y{fill:#2a9a3a;font-size:12px}.ax-z{fill:#1c5ce0}
.strip{width:37px;flex:none;border-right:1px solid #ddd;display:flex;align-items:flex-end;padding:0 0 5px 11px}
.tri-left{border:0;border-top:5px solid transparent;border-bottom:5px solid transparent;border-right:5px solid #222}
.nav{width:902px;flex:none;padding:0 14px 11px 18px;display:flex;flex-direction:column}
.nav-top{height:69px;display:flex;justify-content:flex-end;padding:10px 0 0 0}
.nav-win{width:12px;height:12px;margin-right:-8px}
.grid{width:870px;height:734px;border:1px solid #ddd;border-width:1px 1px 2px;position:relative;overflow:hidden;flex:none}
table{border-collapse:collapse;table-layout:fixed;width:868px;font-size:15px;color:#333}
.c-name{width:250px}.c-chk{width:64px}.c-no{width:74px}.c-tool{width:76px}.c-time{width:93px}.c-all{width:83px}.c-feed{width:111px}.c-spd{width:97px}.c-sb{width:20px}
th{height:24px;background:#eee;font-weight:400;text-align:left;padding:0 0 0 5px;border-right:1px solid #d8d8d8;border-bottom:1px solid #ddd;white-space:nowrap}
td{height:24px;padding:0 0 0 4px;border-right:1px solid #eee;border-bottom:1px solid #eee;white-space:nowrap;overflow:hidden;line-height:22px}
td:nth-child(2){border-left:1px solid #222;padding-left:3px}
tbody tr:nth-child(odd) td{background:#fafafa}
tbody tr:nth-child(even) td{background:#fff}
tbody tr.row-sel td{background:#cde5ea}
tbody tr.row-sel td.tree-2{background:linear-gradient(90deg,#fff 109px,#cde5ea 109px)}
.tree{display:flex;align-items:center;height:24px;border-right:0}
.tree-1{padding-left:43px}
.tree-2{padding-left:84px}
.box{width:10px;height:10px;border:1px solid #bbb;font-size:10px;line-height:8px;text-align:center;background:#fff;margin-right:4px}
.ti{width:15px;height:17px;margin-right:3px}
.ti2{width:14px;margin-left:7px;margin-right:2px}
.warn{color:#f2a63c;font-weight:700;font-size:17px;line-height:20px;width:4px}
.tick{width:14px;height:17px}
.vsb{position:absolute;right:0;top:24px;width:20px;height:690px;display:flex;flex-direction:column;background:#fff}
.vsb-up{height:151px;padding:7px 0 0 6px}
.vsb-thumb{height:514px;background:#c8c8c8;width:19px;margin-left:1px}
.vsb-down{padding:8px 0 0 6px}
.chev{width:10px;height:8px}
.hsb{position:absolute;left:0;bottom:0;right:0;height:20px;background:#eee;display:flex;align-items:center}
.chevh{width:8px;height:13px;margin-left:6px}
.hsb-thumb{width:680px;height:20px;background:#a6a6a6;margin-left:7px}
.chevh-r{margin-left:132px}
.rail{width:34px;flex:none;background:#e1e1e1;border-left:1px solid #bbb;margin-right:3px}
.r{height:48px;display:flex;align-items:center;justify-content:center;flex:none}
.r-first{height:35px}
.r-on{background:#fff;border:1px solid #ccc;border-left:0;margin-left:-1px}
.ri{width:26px;height:26px}

/* status */
.status{height:13px;flex:none;border-top:2px solid #bbb;background:#fff;display:flex;overflow:hidden;font:700 15px/24px "Liberation Sans","Noto Sans CJK SC",sans-serif;color:#111}
.st-l{width:935px;padding-left:3px;font-weight:400;font-size:14px}
.st-r{white-space:nowrap;word-spacing:1.5px}
.orange{position:absolute;left:1909px;top:950px;width:6px;height:81px;background:linear-gradient(#c8c8c8 0,#c8c8c8 12px,#f28a2e 12px);border-radius:3px 3px 0 0}
.wm{position:absolute;right:2px;bottom:1px;font:14.5px/16px "Liberation Serif","Noto Sans CJK SC",serif;color:#777;background:rgba(255,255,255,.4)}

/* dialog */
.dlg{position:absolute;left:601px;top:135px;width:732px;height:785px;background:#efefef;border:1px solid #d0d0d0;border-width:0 1px 1px;display:flex;flex-direction:column}
.dlg-title{height:27px;flex:none;background:#00608a;color:#fff;display:flex;align-items:center;padding:0 10px 0 10px;margin:0 -1px}
.gear{width:14px;height:14px;margin-right:9px}
.dlg-name{flex:1;font-size:18px;line-height:27px;color:#e8f4f8;white-space:nowrap;letter-spacing:.33px}
.dlg-help{font:700 15px "Liberation Sans",sans-serif;margin-right:16px}
.dlg-x{width:12px;height:12px}
.dlg-find{height:43px;flex:none;display:flex;align-items:center;padding:0 10px 0 12px;font-size:14px}
.bino{width:24px;height:24px;margin-right:3px}
.find-t{white-space:nowrap}
.find-in{flex:none;width:646px;height:25px;background:#fff;border:1px solid #888;margin-left:8px}
.dlg-body{height:562px;flex:none;display:flex;padding:0 13px 0 14px;gap:13px}
.dtree{width:209px;flex:none;background:#fff;border:1px solid #ddd;overflow:hidden;font-size:15px;color:#222;padding-top:1px}
.dtree li{height:24px;border-bottom:1px solid #eee;display:flex;padding-left:19px;position:relative;line-height:23px}
.dtree li:nth-child(even){background:#f9f9f9}
.dtree li span{flex:1;padding-left:3px;white-space:nowrap}
.dtree li:not(.none)::before{content:"";position:absolute;left:10px;top:11px;width:9px;border-top:1px dotted #aaa}
.dtree li:not(.none)::after{content:"";position:absolute;left:10px;top:0;height:24px;border-left:1px dotted #aaa}
.dtree li.last::after{height:11px}
.dtree li.on span{background:#cde5ea}
.dtree li.exp::before{left:5px;top:6px;width:10px;height:10px;border:0;background:linear-gradient(#444,#444) center/6px 1px no-repeat,linear-gradient(#444,#444) center/1px 6px no-repeat,#fff;z-index:1}
.dpanel{width:483px;flex:none;background:#eee;border:1px solid #ddd;padding:1px 2px;display:flex;flex-direction:column;gap:4px}
.card{background:#fff;border:1px solid #e0e0e0;border-bottom:2px solid #ddd;padding:0 10px 0 5px;flex:none}
.c-a{height:76px}.c-b{height:191px}.c-c{height:71px}
h3{margin:0;display:flex;align-items:center;font-size:15px;font-weight:700;color:#0a6f96;height:28px;gap:7px;padding-bottom:3px}
.card h3{margin-left:3px}
.c-b h3,.c-c h3{padding-bottom:5px}
.tri-teal{border-top-color:#0a6f96;border-left-width:4.5px;border-right-width:4.5px}
.frow{display:flex;align-items:center;justify-content:flex-end;height:30px;font-size:15px;gap:3px;color:#222}
.frow label{flex:1;white-space:nowrap;padding-bottom:3px}
.frow-tool{height:32px;margin-top:6px;align-items:flex-start}
.frow-tool label{padding:1px 0 0}
.c-b h3{margin-bottom:4px}
.c-c h3{margin-bottom:5px}
.dd{height:27px;border:1px solid #888;background:#fff;display:flex;align-items:center;justify-content:space-between;padding:0 6px 2px 4px;white-space:nowrap;font-size:15px;flex:none}
.dd .tri{border-left-width:5px;border-right-width:5px}
.dd-w{width:151px}
.dd-u{width:70px}
.dd-tool{width:130px}
.num{width:89px;height:27px;border:1px solid #888;background:#fff;text-align:right;padding:0 4px;font-size:16px;line-height:24px;letter-spacing:.8px;flex:none}
.tbtn{width:32px;height:32px;border:1px solid #aaa;background:#fff;padding:2px;flex:none}
.tbtn svg{width:100%;height:100%}
.dops{height:76px;flex:none;margin:5px 11px 0 12px;background:#fff;border:1px solid #ddd;border-bottom:2px solid #ddd;padding:0 7px 0 8px}
.dops h3{height:27px}
.ops{display:flex;padding-left:278px;gap:2px;margin-top:6px}
.obtn{width:32px;height:32px;border:1px solid #888;background:#fff;flex:none;padding:1px}
.oi{width:100%;height:100%}
.ohi{background:#ffdf75;border-color:#f3c860;margin-left:243px;width:34px}
.dcollapse{height:24px;flex:none;display:flex;justify-content:center;align-items:center}
.tri-up{border-top:0;border-bottom:6px solid #222;border-left-width:5.5px;border-right-width:5.5px}
.dsep{height:1px;flex:none;background:#d4d4d4;margin:0 6px}
.dfoot{display:flex;justify-content:flex-end;gap:5px;padding:8px 15px 0 0}
.btn{width:60px;height:28px;font:14px "Noto Sans CJK SC",sans-serif;background:#fff;border:1px solid #00608a;color:#0a6f96;padding:0}
.btn-ok{background:#00608a;color:#fff}
.scrib{position:absolute;height:2.5px;background:#ff1c1c;border-radius:1px}
.scrib-1{left:41px;top:119px;width:60px}
.scrib-2{left:313px;top:210px;width:71px}
```
